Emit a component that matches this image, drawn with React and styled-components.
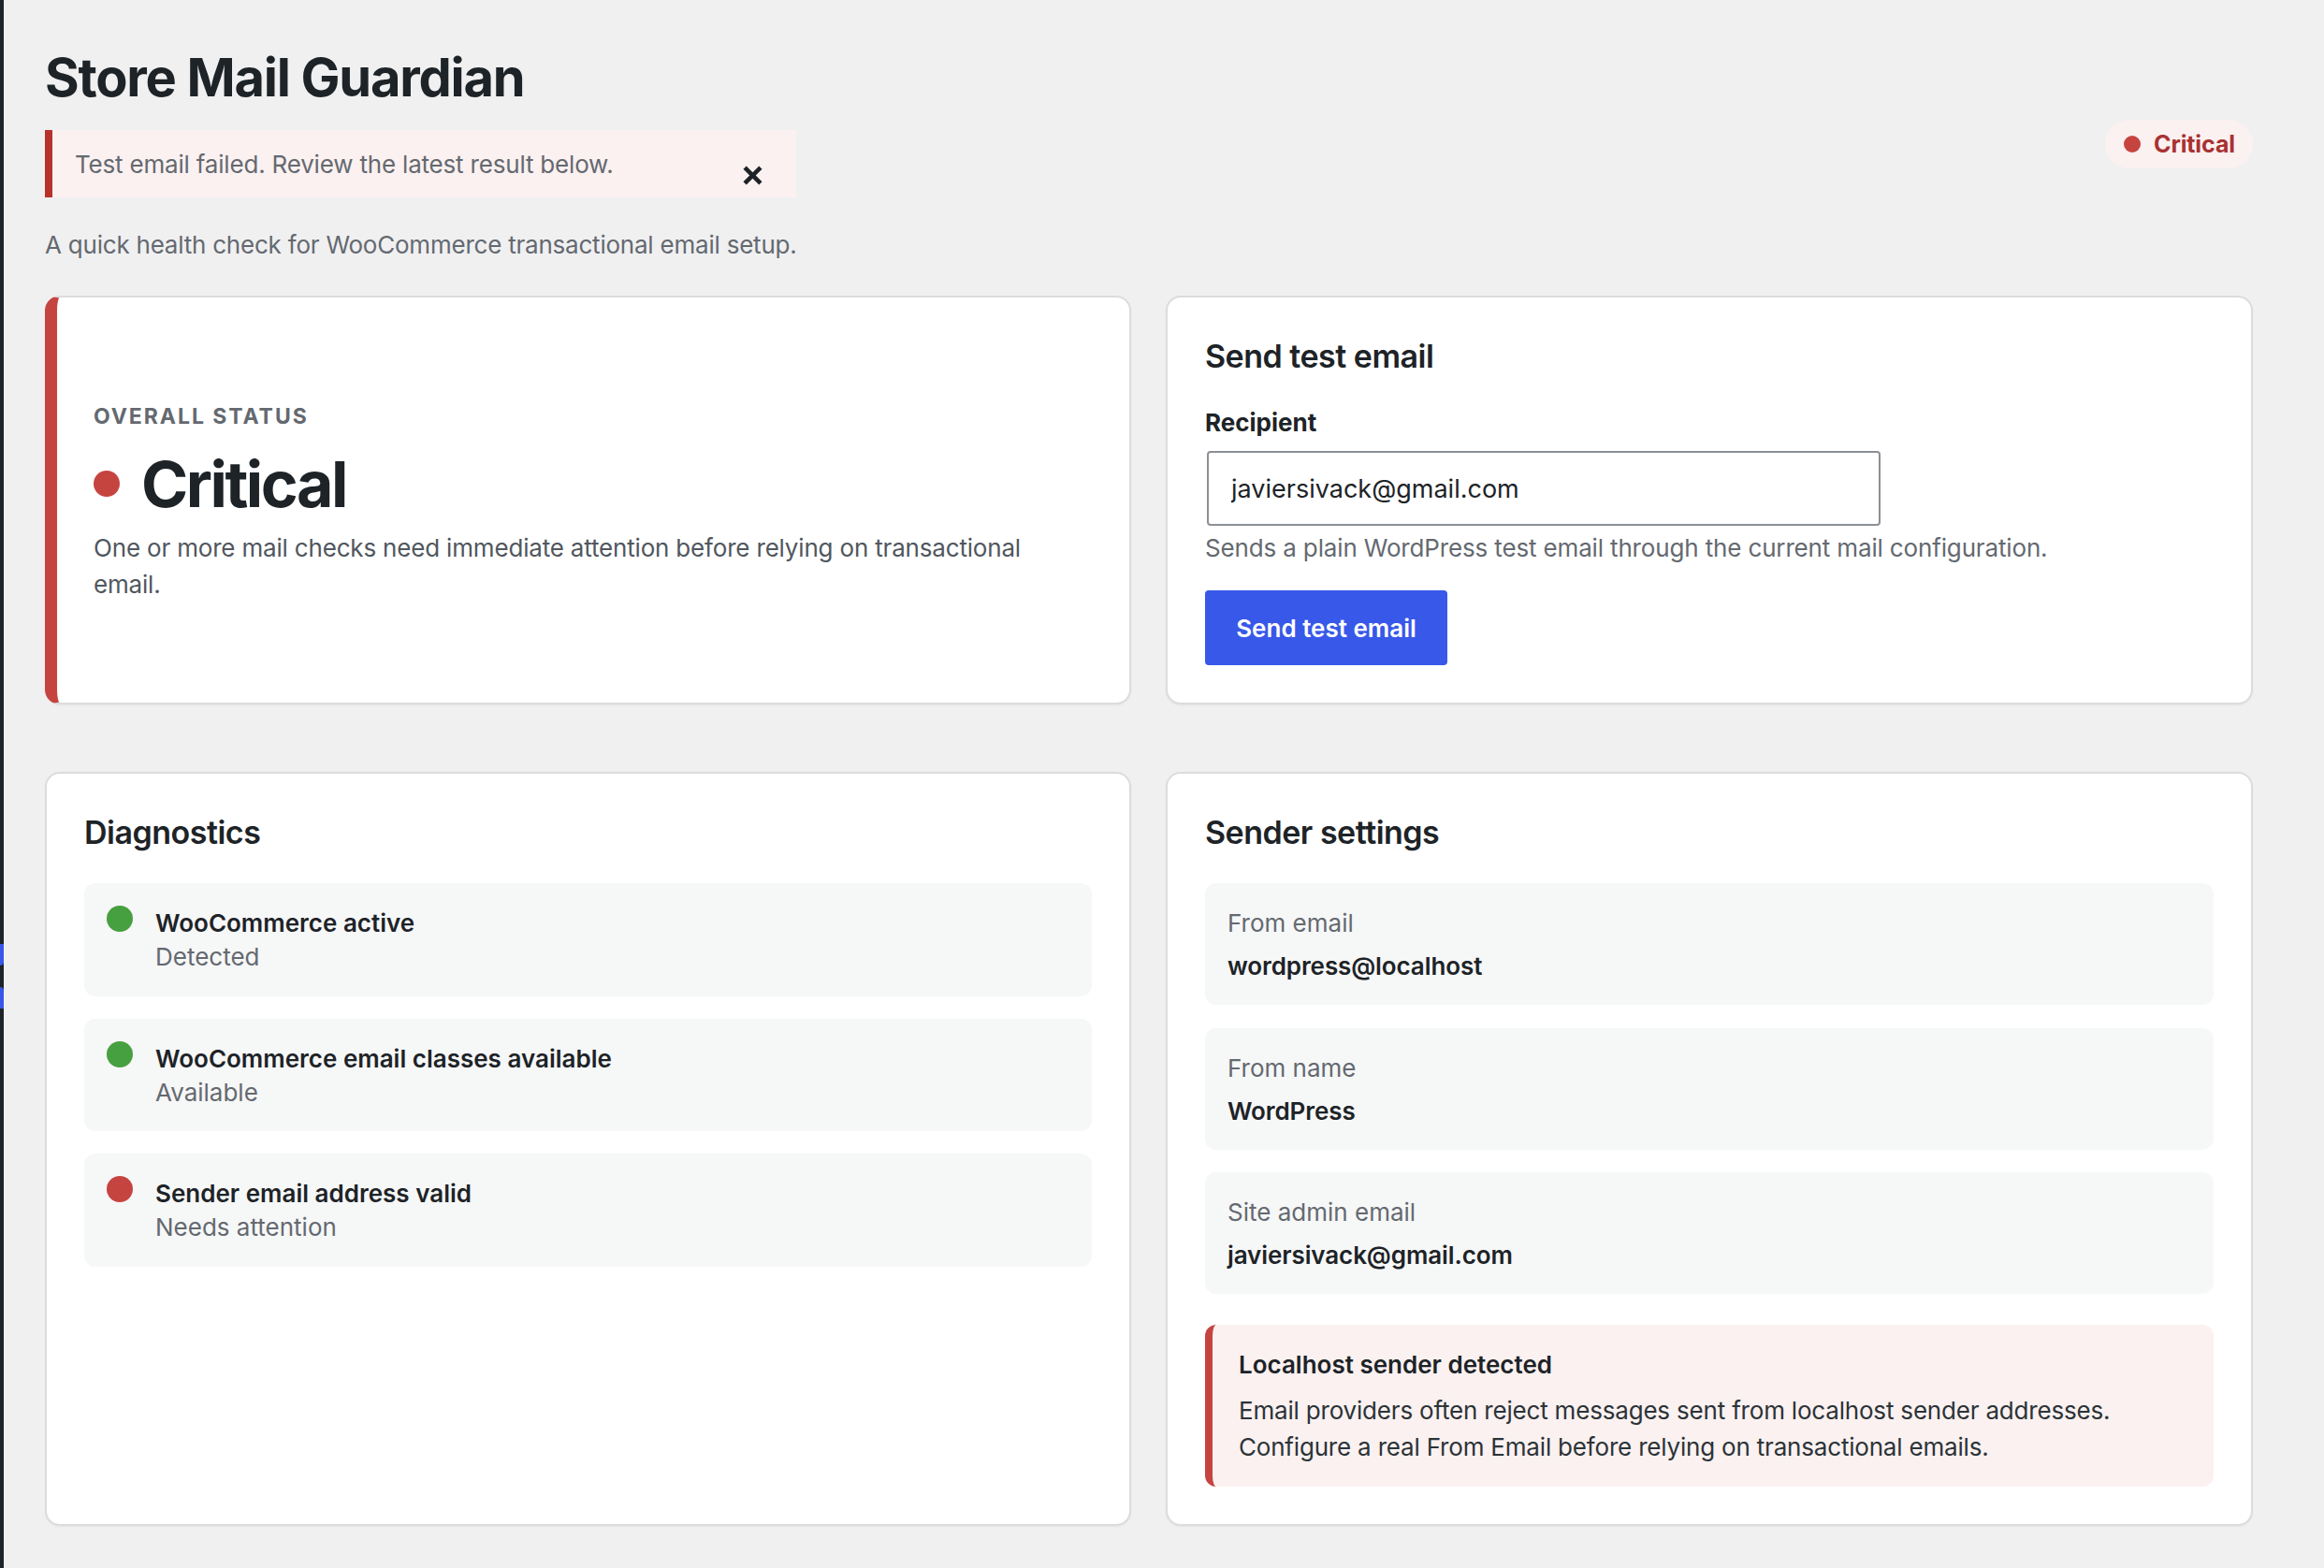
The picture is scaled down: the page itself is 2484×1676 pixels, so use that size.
import React from "react";
import styled, { createGlobalStyle } from "styled-components";

const Global = createGlobalStyle`
  html, body { margin: 0; padding: 0; background: #f0f0f1; }
  body { font-family: Inter, "Liberation Sans", sans-serif; color: #1d2327; }
  * { box-sizing: border-box; }
`;

const Shell = styled.div`
  display: flex;
  width: 2484px;
  height: 1676px;
  overflow: hidden;
`;

const AdminEdge = styled.div`
  width: 4px;
  flex: none;
  background: #1d2327;
  padding-top: 1009px;
  display: flex;
  flex-direction: column;
  gap: 23px;
`;

const EdgeMark = styled.div`
  height: 23px;
  background: #3858e9;
  border-radius: ${(p) => (p.$top ? "0 0 4px 0" : "0 4px 0 0")};
`;

const Main = styled.main`
  flex: 1;
  min-width: 0;
  padding: 44px 76px 0 44px;
`;

const Header = styled.header`
  display: flex;
  justify-content: space-between;
  align-items: flex-start;
  height: 272px;
`;

const HeaderText = styled.div`
  display: flex;
  flex-direction: column;
  align-items: flex-start;
`;

const Title = styled.h1`
  margin: 0;
  font-size: 56px;
  line-height: 78px;
  font-weight: 700;
  letter-spacing: -1.25px;
  color: #1d2327;
`;

const Notice = styled.div`
  margin-top: 17px;
  width: 803px;
  height: 72px;
  display: flex;
  align-items: center;
  justify-content: space-between;
  padding: 0 36px 0 24px;
  background: #fbf1f0;
  border-left: 8px solid #b8322a;
  font-size: 26px;
  letter-spacing: -0.19px;
  color: #646970;
`;

const Dismiss = styled.button`
  all: unset;
  display: flex;
  margin-top: 24px;
  color: #1d2327;
`;

const Tagline = styled.p`
  margin: 33px 0 0;
  font-size: 26px;
  line-height: 36px;
  letter-spacing: -0.22px;
  color: #646970;
`;

const Pill = styled.div`
  margin-top: 84px;
  height: 52px;
  padding: 0 19px 0 20px;
  display: flex;
  align-items: center;
  gap: 14px;
  border-radius: 26px;
  background: #fbf1f0;
  color: #a83232;
  font-size: 25px;
  font-weight: 700;
  letter-spacing: -0.1px;
`;

const Dot = styled.span`
  flex: none;
  display: block;
  width: ${(p) => p.$size}px;
  height: ${(p) => p.$size}px;
  border-radius: 50%;
  background: ${(p) => (p.$tone === "good" ? "#46a03f" : "#c64440")};
`;

const Grid = styled.div`
  display: grid;
  grid-template-columns: 1161px 1162px;
  column-gap: 37px;
  row-gap: 72px;
`;

const Card = styled.section`
  position: relative;
  height: ${(p) => p.$h}px;
  padding: 39px 40px;
  background: #fff;
  border: 2px solid #dcdcde;
  border-radius: 16px;
  box-shadow: 0 1px 2px rgba(0, 0, 0, 0.05);
  overflow: hidden;
`;

const StatusCard = styled(Card)`
  display: flex;
  flex-direction: column;
  justify-content: center;
  padding: 3px 40px 0 39px;
  border-left: 13px solid #c64440;
`;

const Eyebrow = styled.div`
  font-size: 23px;
  line-height: 32px;
  font-weight: 700;
  letter-spacing: 1.95px;
  color: #646970;
`;

const StatusLine = styled.div`
  display: flex;
  align-items: center;
  gap: 23px;
  margin-top: 15px;
`;

const StatusValue = styled.div`
  font-size: 68px;
  line-height: 82px;
  font-weight: 700;
  letter-spacing: -2.5px;
  color: #1d2327;
`;

const StatusText = styled.p`
  margin: 8px 0 0;
  font-size: 26px;
  line-height: 39px;
  letter-spacing: -0.18px;
  color: #50575e;
`;

const CardTitle = styled.h2`
  margin: 0;
  font-size: 34px;
  line-height: 48px;
  font-weight: 600;
  letter-spacing: -0.5px;
  color: #1d2327;
`;

const FieldLabel = styled.label`
  display: block;
  margin-top: 29px;
  font-size: 26px;
  line-height: 36px;
  font-weight: 700;
`;

const EmailInput = styled.input`
  display: block;
  width: 720px;
  height: 80px;
  margin: 12px 0 0 2px;
  padding: 0 24px;
  border: 2px solid #8c8f94;
  border-radius: 4px;
  background: #fff;
  font: 400 27px Inter, sans-serif;
  color: #1d2327;
  outline: none;
`;

const Help = styled.p`
  margin: 6px 0 0;
  font-size: 26px;
  line-height: 36px;
  letter-spacing: -0.15px;
  color: #646970;
`;

const SendButton = styled.button`
  display: block;
  width: 259px;
  height: 80px;
  margin-top: 27px;
  border: 0;
  border-radius: 4px;
  background: #3858e9;
  color: #fff;
  font: 600 26px Inter, sans-serif;
`;

const Stack = styled.div`
  margin-top: 30px;
  display: flex;
  flex-direction: column;
  gap: ${(p) => p.$gap}px;
`;

const CheckRow = styled.div`
  display: flex;
  gap: 24px;
  height: 120.5px;
  padding: 24px 24px 0 24px;
  background: #f6f7f7;
  border-radius: 12px;
`;

const CheckBody = styled.div`
  padding-top: 1px;
`;

const CheckName = styled.div`
  font-size: 26px;
  line-height: 36px;
  font-weight: 600;
`;

const CheckState = styled.div`
  font-size: 26px;
  line-height: 36px;
  color: #646970;
`;

const SettingRow = styled.div`
  height: 130px;
  padding: 25px 24px 0;
  background: #f6f7f7;
  border-radius: 12px;
`;

const SettingLabel = styled.div`
  font-size: 26px;
  line-height: 36px;
  color: #646970;
`;

const SettingValue = styled.div`
  margin-top: 10px;
  font-size: 26px;
  line-height: 36px;
  font-weight: 600;
  letter-spacing: -0.1px;
`;

const Alert = styled.div`
  margin-top: 33px;
  height: 173px;
  padding: 25px 24px 0 28px;
  background: #faf1f0;
  border-left: 8px solid #c64440;
  border-radius: 12px;
`;

const AlertTitle = styled.div`
  font-size: 26px;
  line-height: 36px;
  font-weight: 600;
`;

const AlertText = styled.p`
  margin: 11px 0 0;
  font-size: 26px;
  line-height: 39px;
  letter-spacing: -0.19px;
  color: #2c3338;
`;

const checks = [
  { name: "WooCommerce active", state: "Detected", tone: "good" },
  { name: "WooCommerce email classes available", state: "Available", tone: "good" },
  { name: "Sender email address valid", state: "Needs attention", tone: "bad" },
];

const settings = [
  { label: "From email", value: "wordpress@localhost" },
  { label: "From name", value: "WordPress" },
  { label: "Site admin email", value: "javiersivack@gmail.com" },
];

export default function App() {
  return (
    <>
      <Global />
      <Shell>
        <AdminEdge>
          <EdgeMark $top />
          <EdgeMark />
        </AdminEdge>
        <Main>
          <Header>
            <HeaderText>
              <Title>Store Mail Guardian</Title>
              <Notice>
                <span>Test email failed. Review the latest result below.</span>
                <Dismiss aria-label="Dismiss">
                  <svg width="21" height="21" viewBox="0 0 20 20" fill="none" stroke="currentColor" strokeWidth="4.4">
                    <path d="M2 2l16 16M18 2L2 18" />
                  </svg>
                </Dismiss>
              </Notice>
              <Tagline>A quick health check for WooCommerce transactional email setup.</Tagline>
            </HeaderText>
            <Pill>
              <Dot $size={18} />
              Critical
            </Pill>
          </Header>
          <Grid>
            <StatusCard $h={437}>
              <Eyebrow>OVERALL STATUS</Eyebrow>
              <StatusLine>
                <Dot $size={28} />
                <StatusValue>Critical</StatusValue>
              </StatusLine>
              <StatusText>One or more mail checks need immediate attention before relying on transactional email.</StatusText>
            </StatusCard>
            <Card $h={437}>
              <CardTitle>Send test email</CardTitle>
              <FieldLabel htmlFor="recipient">Recipient</FieldLabel>
              <EmailInput id="recipient" defaultValue="javiersivack@gmail.com" />
              <Help>Sends a plain WordPress test email through the current mail configuration.</Help>
              <SendButton>Send test email</SendButton>
            </Card>
            <Card $h={806}>
              <CardTitle>Diagnostics</CardTitle>
              <Stack $gap={24}>
                {checks.map((c) => (
                  <CheckRow key={c.name}>
                    <Dot $size={28} $tone={c.tone} />
                    <CheckBody>
                      <CheckName>{c.name}</CheckName>
                      <CheckState>{c.state}</CheckState>
                    </CheckBody>
                  </CheckRow>
                ))}
              </Stack>
            </Card>
            <Card $h={806}>
              <CardTitle>Sender settings</CardTitle>
              <Stack $gap={24.5}>
                {settings.map((s) => (
                  <SettingRow key={s.label}>
                    <SettingLabel>{s.label}</SettingLabel>
                    <SettingValue>{s.value}</SettingValue>
                  </SettingRow>
                ))}
              </Stack>
              <Alert>
                <AlertTitle>Localhost sender detected</AlertTitle>
                <AlertText>
                  Email providers often reject messages sent from localhost sender addresses.
                  <br />
                  Configure a real From Email before relying on transactional emails.
                </AlertText>
              </Alert>
            </Card>
          </Grid>
        </Main>
      </Shell>
    </>
  );
}
